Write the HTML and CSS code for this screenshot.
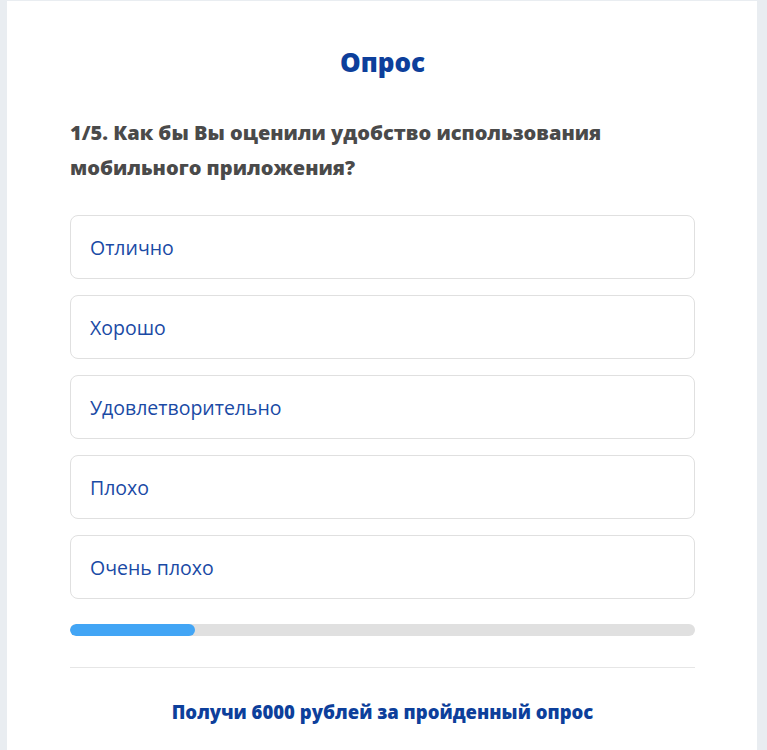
FILE: index.html
```html
<!DOCTYPE html>
<html>
<head>
  <meta charset="utf-8">
  <title>Опрос</title>
  <link rel="stylesheet" href="styles.css">
</head>
<body>
  <div class="survey">
    <h1 class="title">Опрос</h1>

    <p class="question">1/5. Как бы Вы оценили удобство использования мобильного приложения?</p>

    <div class="options">
      <button class="option">Отлично</button>
      <button class="option">Хорошо</button>
      <button class="option">Удовлетворительно</button>
      <button class="option">Плохо</button>
      <button class="option">Очень плохо</button>
    </div>

    <!-- Progress -->
    <div class="progress">
      <div class="progress-fill" style="width: 20%"></div>
    </div>

    <div class="footer">
      <a href="#">Получи 6000 рублей за пройденный опрос</a>
    </div>
  </div>
</body>
</html>
```

FILE: styles.css
```css
    body {
      margin: 0;
      padding: 1px 0 0 7px;
      background-color: #e9edf1;
      font-family: 'Open Sans', sans-serif;
    }

    .survey {
      background-color: white;
      width: 750px;
      box-sizing: border-box;
      padding: 44px 62px 0 63px;
      min-height: 749px;
    }

    .title {
      margin: 0;
      text-align: center;
      color: #0d3f9b;
      font-size: 26px;
      font-weight: 800;
      line-height: 34px;
    }

    .question {
      margin: 36px 0 0 0;
      color: #4a4a4a;
      font-size: 20px;
      font-weight: 800;
      line-height: 35px;
    }

    .options {
      display: flex;
      flex-direction: column;
      gap: 16px;
      margin-top: 30px;
    }

    .option {
      height: 64px;
      padding: 0 19px;
      text-align: left;
      background-color: white;
      border: 1px solid #e0e0e0;
      border-radius: 8px;
      color: #1a4aa5;
      font-family: 'Open Sans', sans-serif;
      font-size: 19.5px;
      cursor: pointer;
    }

    .option:hover {
      background-color: #f5f8fc;
    }

    .progress {
      margin-top: 25px;
      height: 12px;
      background-color: #e0e0e0;
      border-radius: 6px;
      overflow: hidden;
    }

    .progress-fill {
      height: 100%;
      background-color: #42a5f5;
      border-radius: 6px;
    }

    .footer {
      margin-top: 31px;
      border-top: 1px solid #e6e6e6;
      padding-top: 31px;
      text-align: center;
    }

    .footer a {
      color: #0d3f9b;
      text-decoration: none;
      font-size: 18.5px;
      font-weight: 800;
    }
```
